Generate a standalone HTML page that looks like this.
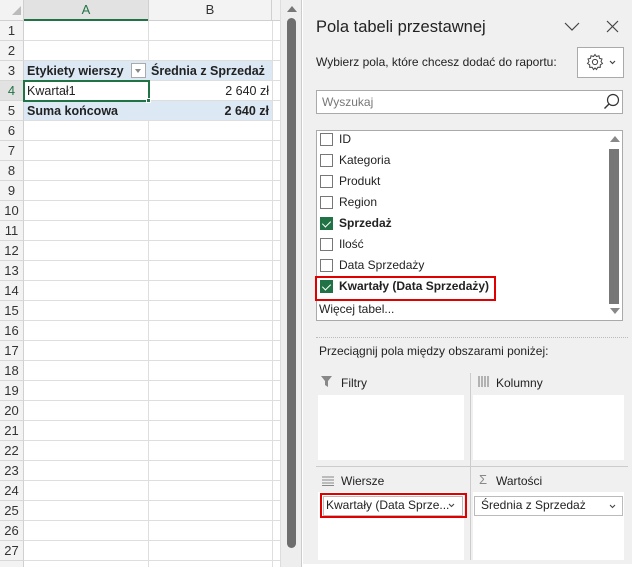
<!DOCTYPE html>
<html><head><meta charset="utf-8"><style>
*{margin:0;padding:0;box-sizing:border-box}
body{width:637px;height:573px;overflow:hidden;background:#fff;font-family:"Liberation Sans",sans-serif;font-size:12px;color:#222;position:relative}
.a{position:absolute}
.rh{position:absolute;left:0;width:24px;height:20px;background:#f3f3f3;border-bottom:1px solid #d8d8d8;border-right:1px solid #d0d0d0;text-align:center;line-height:20px;font-size:13px;color:#333}
.gl{position:absolute;left:24px;width:256px;height:1px;background:#dedede}
.cb{position:absolute;left:320px;width:13px;height:13px;border:1px solid #777;background:#fff}
.ck{background:#217346;border-color:#217346}
.ck:after{content:"";position:absolute;left:3px;top:1px;width:4px;height:7px;border:solid #fff;border-width:0 1.5px 1.5px 0;transform:rotate(45deg)}
.it{position:absolute;left:339px;font-size:12px;color:#222}
</style></head><body>
<div class="a" style="left:0;top:0;width:280px;height:21px;background:#f3f3f3;border-bottom:1px solid #d0d0d0"></div>
<div class="a" style="left:24px;top:0;width:124px;height:21px;background:#e2e2e2;border-bottom:2px solid #217346;text-align:center;line-height:20px;font-size:13px;color:#217346">A</div>
<div class="a" style="left:148px;top:0;width:124px;height:21px;border-left:1px solid #d0d0d0;border-right:1px solid #d0d0d0;text-align:center;line-height:20px;font-size:13px;color:#333">B</div>
<div class="a" style="left:0;top:0;width:24px;height:21px;border-right:1px solid #d0d0d0"></div>
<div class="a" style="left:12px;top:6px;width:0;height:0;border-left:9px solid transparent;border-bottom:9px solid #bbb"></div>
<div class="a" id="grid" style="left:0;top:0;width:280px;height:567px;overflow:hidden">
<div id="rows"></div>
<div class="a" style="left:148px;top:21px;width:1px;height:552px;background:#dedede"></div>
<div class="a" style="left:272px;top:21px;width:1px;height:552px;background:#dedede"></div>
</div>
<script>
var h='';for(var i=1;i<=28;i++){var t=21+(i-1)*20;h+='<div class="rh" style="top:'+t+'px;'+(i==4?'background:#e2e2e2;color:#217346;':'')+'">'+(i<=27?i:'')+'</div><div class="gl" style="top:'+(t+19)+'px"></div>';}
document.getElementById('rows').innerHTML=h;
</script>
<div class="a" style="left:24px;top:61px;width:248px;height:19px;background:#dce9f5"></div>
<div class="a" style="left:24px;top:101px;width:248px;height:19px;background:#dce9f5"></div>
<div class="a" style="left:27px;top:64px;font-weight:bold;font-size:12.5px">Etykiety wierszy</div>
<div class="a" style="left:131px;top:63px;width:15px;height:15px;border:1px solid #aaa;background:#fff"></div>
<div class="a" style="left:135px;top:69px;border-left:3.5px solid transparent;border-right:3.5px solid transparent;border-top:4px solid #888"></div>
<div class="a" style="left:151px;top:64px;font-weight:bold;font-size:12.5px">Średnia z Sprzedaż</div>
<div class="a" style="left:27px;top:84px;font-size:12.5px">Kwartał1</div>
<div class="a" style="left:150px;top:84px;width:119px;text-align:right;font-size:12.5px">2 640 zł</div>
<div class="a" style="left:27px;top:104px;font-weight:bold;font-size:12.5px">Suma końcowa</div>
<div class="a" style="left:150px;top:104px;width:119px;text-align:right;font-weight:bold;font-size:12.5px">2 640 zł</div>
<div class="a" style="left:23px;top:80px;width:127px;height:22px;border:2px solid #217346"></div>
<div class="a" style="left:146px;top:98px;width:5px;height:5px;background:#217346;border:1px solid #fff"></div>
<div class="a" style="left:280px;top:0;width:22px;height:567px;background:#eeeeee;border-left:1px solid #ddd;border-right:1px solid #ccc"></div>
<div class="a" style="left:287px;top:6px;border-left:5px solid transparent;border-right:5px solid transparent;border-bottom:6px solid #777"></div>
<div class="a" style="left:287px;top:18px;width:9px;height:530px;background:#6e6e6e;border-radius:5px"></div>
<div class="a" style="left:303px;top:0;width:329px;height:564px;background:#f0f0f0"></div>
<div class="a" style="left:316px;top:18px;font-size:16.5px;color:#222">Pola tabeli przestawnej</div>
<svg class="a" style="left:564px;top:22px" width="16" height="10"><path d="M1 1 L8 8 L15 1" fill="none" stroke="#444" stroke-width="1.2"/></svg>
<svg class="a" style="left:606px;top:20px" width="13" height="13"><path d="M1 1 L12 12 M12 1 L1 12" fill="none" stroke="#444" stroke-width="1.2"/></svg>
<div class="a" style="left:316px;top:55px;font-size:12px">Wybierz pola, które chcesz dodać do raportu:</div>
<div class="a" style="left:577px;top:47px;width:47px;height:31px;border:1px solid #aaa;background:#fff"></div>
<svg class="a" style="left:586px;top:53px" width="18" height="18" viewBox="0 0 18 18"><path d="M9 1.5 L10.5 3.5 L13 2.8 L13.5 5.3 L16 6 L15 8.5 L16.5 10.5 L14.3 11.8 L14.3 14.3 L11.8 14.2 L10.5 16.5 L9 15 L7.5 16.5 L6.2 14.2 L3.7 14.3 L3.7 11.8 L1.5 10.5 L3 8.5 L2 6 L4.5 5.3 L5 2.8 L7.5 3.5 Z" fill="none" stroke="#444" stroke-width="1"/><circle cx="9" cy="9" r="2.6" fill="none" stroke="#444" stroke-width="1"/></svg>
<svg class="a" style="left:609px;top:60px" width="7" height="5"><path d="M1 1 L3.5 3.5 L6 1" fill="none" stroke="#444" stroke-width="1.2"/></svg>
<div class="a" style="left:316px;top:90px;width:307px;height:24px;border:1px solid #aaa;background:#fff"></div>
<div class="a" style="left:322px;top:95px;font-size:12px;color:#777">Wyszukaj</div>
<svg class="a" style="left:603px;top:93px" width="17" height="17"><circle cx="10" cy="7" r="5.5" fill="none" stroke="#333" stroke-width="1.2"/><path d="M6 11 L1.5 15.5" stroke="#333" stroke-width="1.4"/></svg>
<div class="a" style="left:316px;top:130px;width:307px;height:191px;border:1px solid #aaa;background:#fff"></div>
<div class="a" style="left:610px;top:136px;border-left:5px solid transparent;border-right:5px solid transparent;border-bottom:6px solid #888"></div>
<div class="a" style="left:609px;top:149px;width:10px;height:155px;background:#777"></div>
<div class="a" style="left:610px;top:308px;border-left:5px solid transparent;border-right:5px solid transparent;border-top:6px solid #888"></div>
<div class="cb" style="top:133px"></div><div class="it" style="top:132px">ID</div>
<div class="cb" style="top:154px"></div><div class="it" style="top:153px">Kategoria</div>
<div class="cb" style="top:175px"></div><div class="it" style="top:174px">Produkt</div>
<div class="cb" style="top:196px"></div><div class="it" style="top:195px">Region</div>
<div class="cb ck" style="top:217px"></div><div class="it" style="top:216px;font-weight:bold">Sprzedaż</div>
<div class="cb" style="top:238px"></div><div class="it" style="top:237px">Ilość</div>
<div class="cb" style="top:259px"></div><div class="it" style="top:258px">Data Sprzedaży</div>
<div class="cb ck" style="top:280px"></div><div class="it" style="top:279px;font-weight:bold">Kwartały (Data Sprzedaży)</div>
<div class="a" style="left:315px;top:276px;width:181px;height:25px;border:2.5px solid #e00000"></div>
<div class="a" style="left:319px;top:302px;font-size:12px">Więcej tabel...</div>
<div class="a" style="left:316px;top:337px;width:312px;border-top:1px dotted #bbb"></div>
<div class="a" style="left:319px;top:344px;font-size:12px">Przeciągnij pola między obszarami poniżej:</div>
<div class="a" style="left:470px;top:373px;width:1px;height:187px;background:#ccc"></div>
<div class="a" style="left:316px;top:466px;width:312px;height:1px;background:#ccc"></div>
<svg class="a" style="left:321px;top:376px" width="11" height="11"><path d="M0 0 H11 L7 5 V11 L4 9 V5 Z" fill="#888"/></svg>
<div class="a" style="left:341px;top:376px">Filtry</div>
<svg class="a" style="left:478px;top:376px" width="12" height="11"><path d="M1 0V11M4 0V11M7 0V11M10 0V11" stroke="#888" stroke-width="1.2"/></svg>
<div class="a" style="left:496px;top:376px">Kolumny</div>
<div class="a" style="left:318px;top:395px;width:146px;height:65px;background:#fff"></div>
<div class="a" style="left:473px;top:395px;width:151px;height:65px;background:#fff"></div>
<svg class="a" style="left:322px;top:476px" width="12" height="10"><path d="M0 1H12M0 4H12M0 7H12M0 9.5H12" stroke="#888" stroke-width="1"/></svg>
<div class="a" style="left:341px;top:474px">Wiersze</div>
<div class="a" style="left:479px;top:472px;color:#888;font-size:13px">Σ</div>
<div class="a" style="left:496px;top:474px">Wartości</div>
<div class="a" style="left:318px;top:492px;width:146px;height:68px;background:#fff"></div>
<div class="a" style="left:473px;top:492px;width:151px;height:68px;background:#fff"></div>
<div class="a" style="left:323px;top:496px;width:140px;height:20px;border:1px solid #bbb;background:#fff"></div>
<div class="a" style="left:326px;top:498px;font-size:12px">Kwartały (Data Sprze...</div>
<svg class="a" style="left:448px;top:503px" width="7" height="5"><path d="M1 1L3.5 3.5L6 1" fill="none" stroke="#444" stroke-width="1.1"/></svg>
<div class="a" style="left:320px;top:493px;width:147px;height:25px;border:2.5px solid #e00000"></div>
<div class="a" style="left:474px;top:496px;width:149px;height:20px;border:1px solid #bbb;background:#fff"></div>
<div class="a" style="left:481px;top:498px;font-size:12px">Średnia z Sprzedaż</div>
<svg class="a" style="left:609px;top:504px" width="7" height="5"><path d="M1 1L3.5 3.5L6 1" fill="none" stroke="#444" stroke-width="1.1"/></svg>
</body></html>
